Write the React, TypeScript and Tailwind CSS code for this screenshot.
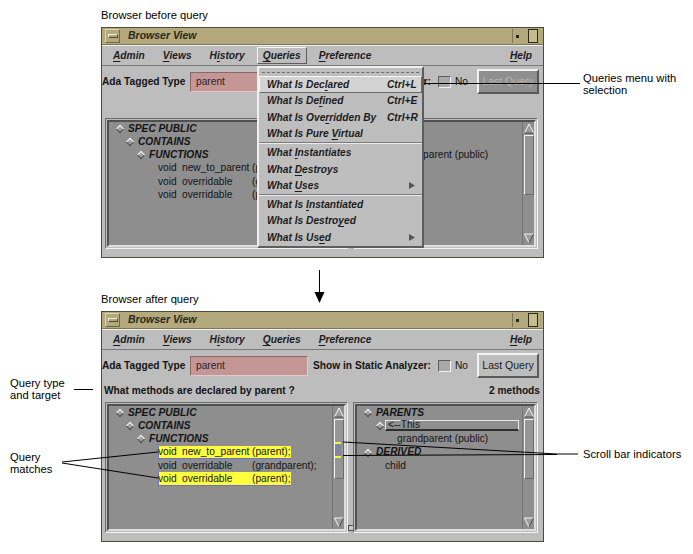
import React from "react";

const raised =
  "border border-t-[#f2f2f2] border-l-[#f2f2f2] border-b-[#6a6a6a] border-r-[#6a6a6a]";

function Mn({ text, at }: { text: string; at: number }) {
  return (
    <>
      {text.slice(0, at)}
      <span className="underline decoration-1 underline-offset-[2px]">{text[at]}</span>
      {text.slice(at + 1)}
    </>
  );
}

function Diamond() {
  return (
    <span className="w-[10px] h-[10px] flex items-center justify-center shrink-0">
      <span className="block w-[6px] h-[6px] rotate-45 border border-t-[#f6f6f6] border-l-[#f6f6f6] border-b-[#4a4a4a] border-r-[#4a4a4a] bg-[#a0a0a0]" />
    </span>
  );
}

function Node({ pad, label }: { pad: string; label: string }) {
  return (
    <div className={`h-[13.3px] flex items-center whitespace-nowrap ${pad}`}>
      <Diamond />
      <span className="ml-[3px] font-bold italic">{label}</span>
    </div>
  );
}

function Method({ name, owner, hit }: { name: string; owner: string; hit: boolean }) {
  return (
    <div className="h-[13.3px] flex items-center pl-[49px] whitespace-nowrap">
      <span
        className={`h-full flex items-center w-[133px] ${
          hit ? "bg-[#ffff3c] shadow-[inset_1px_0_0_#6d6dd2,inset_0_-1px_0_#6d6dd2]" : ""
        }`}
      >
        <span className="w-[24px] shrink-0">void</span>
        <span className="w-[70px] shrink-0">{name}</span>
        <span>{owner}</span>
      </span>
    </div>
  );
}

function ScrollBar({ marks = false }: { marks?: boolean }) {
  return (
    <div className="w-[12px] h-full flex flex-col items-center bg-[#8e8e8e] border-l border-[#747474]">
      <svg width="10" height="11" className="mt-[1px] shrink-0">
        <polyline points="0.5,10 5,1 9.5,10" fill="#9c9c9c" stroke="#f4f4f4" />
        <line x1="0.5" y1="10" x2="9.5" y2="10" stroke="#505050" />
      </svg>
      <div className={`mt-[1px] w-[10px] h-[60px] flex flex-col shrink-0 bg-[#969696] ${raised}`}>
        {marks && (
          <>
            <div className="h-[22px]" />
            <div className="h-[2px] w-[6px] bg-[#f5f53a]" />
            <div className="h-[12px] w-[6px] bg-[#80869f]" />
            <div className="h-[2px] w-[6px] bg-[#f5f53a]" />
          </>
        )}
      </div>
      <div className="flex-1" />
      <svg width="10" height="11" className="mb-[1px] shrink-0">
        <polyline points="9.5,1 0.5,1 5,10" fill="#9c9c9c" stroke="#f4f4f4" />
        <line x1="5" y1="10" x2="9.5" y2="1" stroke="#505050" />
      </svg>
    </div>
  );
}

function Pane({ wide, marks, children }: { wide: boolean; marks?: boolean; children: React.ReactNode }) {
  return (
    <div
      className={`${wide ? "w-[243px]" : "w-[185px]"} h-full border border-t-[#6a6a6a] border-l-[#6a6a6a] border-b-[#f4f4f4] border-r-[#f4f4f4] p-[1px]`}
    >
      <div className="h-full border-2 border-t-[#505050] border-l-[#505050] border-b-[#dedede] border-r-[#dedede] flex">
        <div className="flex-1 bg-[#8e8e8e] overflow-hidden text-[10.2px] leading-none text-[#141414]">
          {children}
        </div>
        <ScrollBar marks={marks} />
      </div>
    </div>
  );
}

type Item =
  | { sep: true }
  | { sep?: false; text: string; at: number; key?: string; sub?: boolean; sel?: boolean };

const MENU: Item[] = [
  { text: "What Is Declared", at: 11, key: "Ctrl+L", sel: true },
  { text: "What Is Defined", at: 10, key: "Ctrl+E" },
  { text: "What Is Overridden By", at: 11, key: "Ctrl+R" },
  { text: "What Is Pure Virtual", at: 13 },
  { sep: true },
  { text: "What Instantiates", at: 5 },
  { text: "What Destroys", at: 5 },
  { text: "What Uses", at: 5, sub: true },
  { sep: true },
  { text: "What Is Instantiated", at: 8 },
  { text: "What Is Destroyed", at: 14 },
  { text: "What Is Used", at: 10, sub: true },
];

function QueriesMenu() {
  return (
    <div
      className={`absolute left-[155px] top-[38px] z-10 w-[167px] h-[182px] bg-[#bebebe] border-2 border-t-[#f0f0f0] border-l-[#f0f0f0] border-b-[#5e5e5e] border-r-[#5e5e5e] text-[10.2px] font-bold italic text-[#1c1c1c]`}
    >
      <div className="h-[8px] flex items-center px-[3px]">
        <div className="w-full border-t border-dashed border-[#6e6e6e]" />
      </div>
      {MENU.map((m, i) =>
        m.sep ? (
          <div key={i} className="h-[2px] border-t border-[#7a7a7a] border-b border-b-[#ececec]" />
        ) : (
          <div
            key={i}
            className={`h-[16.6px] flex items-center pl-[7px] whitespace-nowrap border ${
              m.sel
                ? "bg-[#d3d3d3] border-t-[#f6f6f6] border-l-[#f6f6f6] border-b-[#6a6a6a] border-r-[#6a6a6a]"
                : "border-transparent"
            }`}
          >
            <span className="flex-1">
              <Mn text={m.text} at={m.at} />
            </span>
            <span className="w-[34px] flex items-center">
              {m.key}
              {m.sub && (
                <svg width="6" height="7" className="ml-[22px]">
                  <polygon points="0,0 6,3.5 0,7" fill="#555" />
                </svg>
              )}
            </span>
          </div>
        )
      )}
    </div>
  );
}

const MENUBAR = [
  { text: "Admin", at: 0 },
  { text: "Views", at: 0 },
  { text: "History", at: 1 },
  { text: "Queries", at: 0 },
  { text: "Preference", at: 0 },
];

function BrowserWindow({ before = false }: { before?: boolean }) {
  return (
    <div className="relative w-[443px] h-[231px] border border-[#4d4b3c] bg-[#bdbdbd] flex flex-col">
      {/* title bar */}
      <div className="h-[17px] bg-[#b3a97c] flex items-center border-b border-[#7e7856]">
        <div className={`ml-[3px] w-[15px] h-[14px] flex items-center justify-center ${"border border-t-[#ddd6b0] border-l-[#ddd6b0] border-b-[#6d684a] border-r-[#6d684a]"}`}>
          <div className="w-[10px] h-[4px] border border-t-[#f0ecd6] border-l-[#f0ecd6] border-b-[#4d4935] border-r-[#4d4935]" />
        </div>
        <span className="ml-[8px] text-[10.5px] font-bold italic text-[#2a2818]">Browser View</span>
        <div className="ml-auto mr-[5px] flex items-center gap-[6px]">
          <div className="w-[10px] h-[14px] flex items-center justify-center border-l border-[#7e7856]">
            <div className="w-[3px] h-[3px] bg-[#2a2818]" />
          </div>
          <div className="w-[10px] h-[14px] border border-[#2a2818] bg-[#c4bb90]" />
        </div>
      </div>

      {/* menu bar */}
      <div className="h-[21px] flex items-center pl-[5px] pr-[5px] gap-[6px] border-t border-[#f0f0f0] border-b border-b-[#7a7a7a] text-[10.2px] font-bold italic text-[#1c1c1c]">
        {MENUBAR.map((m) => (
          <span
            key={m.text}
            className={`h-[17px] px-[5px] flex items-center border ${
              before && m.text === "Queries"
                ? "border-t-[#f6f6f6] border-l-[#f6f6f6] border-b-[#5e5e5e] border-r-[#5e5e5e]"
                : "border-transparent"
            }`}
          >
            <Mn text={m.text} at={m.at} />
          </span>
        ))}
        <span className="ml-auto h-[17px] px-[5px] flex items-center border border-transparent">
          <Mn text="Help" at={0} />
        </span>
      </div>

      {/* type row */}
      <div className="h-[31px] flex items-center pr-[4px] text-[10.2px] text-[#141414]">
        <span className="w-[88px] font-bold whitespace-nowrap">Ada Tagged Type</span>
        <div className="w-[118px] h-[20px] flex items-center pl-[5px] bg-[#c49696] border border-t-[#8a6868] border-l-[#8a6868] border-b-[#e6c8c8] border-r-[#e6c8c8] text-[#2b1f1f]">
          parent
        </div>
        <span className="ml-[5px] font-bold whitespace-nowrap">Show in Static Analyzer:</span>
        <div className="ml-[7px] w-[13px] h-[12px] bg-[#a9a9a9] border border-t-[#5e5e5e] border-l-[#5e5e5e] border-b-[#f2f2f2] border-r-[#f2f2f2]" />
        <span className="ml-[4px]">No</span>
        <div
          className={`ml-auto w-[62px] h-[25px] flex items-center justify-center border-2 border-t-[#f2f2f2] border-l-[#f2f2f2] border-b-[#5a5a5a] border-r-[#5a5a5a] text-[10.5px] ${
            before ? "bg-[#8f8f8f] text-[#b6b6b6]" : "bg-[#bdbdbd] text-[#1c1c1c]"
          }`}
        >
          Last Query
        </div>
      </div>

      {/* query label row */}
      <div className="h-[19px] flex items-center pl-[2px] pr-[3px] text-[10.2px] font-bold text-[#141414]">
        {!before && (
          <>
            <span>What methods are declared by parent ?</span>
            <span className="ml-auto">2 methods</span>
          </>
        )}
      </div>

      {/* panes */}
      <div className="mt-[2px] h-[131px] flex pl-[3px]">
        <Pane wide marks={!before}>
          <Node pad="pl-[6px]" label="SPEC PUBLIC" />
          <Node pad="pl-[16px]" label="CONTAINS" />
          <Node pad="pl-[27px]" label="FUNCTIONS" />
          <Method name="new_to_parent" owner="(parent);" hit={!before} />
          <Method name="overridable" owner="(grandparent);" hit={false} />
          <Method name="overridable" owner="(parent);" hit={!before} />
        </Pane>
        <div className="w-[5px] flex flex-col justify-end items-center pb-[2px]">
          <div className="w-[6px] h-[6px] shrink-0 bg-[#c8c8c8] border border-[#4e4e4e]" />
        </div>
        <Pane wide={false}>
          <Node pad="pl-[6px]" label="PARENTS" />
          <div className="h-[13.3px] flex items-center pl-[18px] whitespace-nowrap">
            <Diamond />
            {before ? (
              <span className="ml-[3px]">&lt;--This</span>
            ) : (
              <span className="w-[134px] h-[11px] flex items-center pl-[2px] border border-[#e8e8e8] border-b-2 border-b-[#2e2e2e]">
                &lt;--This
              </span>
            )}
          </div>
          <div className="h-[13.3px] flex items-center pl-[40px] whitespace-nowrap">grandparent (public)</div>
          <Node pad="pl-[6px]" label="DERIVED" />
          <div className="h-[13.3px] flex items-center pl-[28px]">child</div>
        </Pane>
      </div>

      {before && <QueriesMenu />}
    </div>
  );
}

export default function App() {
  return (
    <div className="relative w-[693px] h-[554px] bg-white overflow-hidden font-['Liberation_Sans',Arial,Helvetica,sans-serif] text-black">
      <div className="pl-[101px] pt-[8px]">
        <div className="h-[14px] leading-[14px] text-[11.2px]">Browser before query</div>
        <div className="mt-[5px]">
          <BrowserWindow before />
        </div>
        <div className="mt-[34px] h-[14px] leading-[14px] text-[11.2px]">Browser after query</div>
        <div className="mt-[5px]">
          <BrowserWindow />
        </div>
      </div>

      {/* callout labels */}
      <div className="absolute left-[583px] top-[73px] text-[11.2px] leading-[11.5px]">
        Queries menu with
        <br />
        selection
      </div>
      <div className="absolute left-[10px] top-[378px] text-[11.2px] leading-[11.5px]">
        Query type
        <br />
        and target
      </div>
      <div className="absolute left-[10px] top-[452px] text-[11.2px] leading-[11.5px]">
        Query
        <br />
        matches
      </div>
      <div className="absolute left-[583px] top-[447px] text-[11.2px] leading-[14px] whitespace-nowrap">
        Scroll bar indicators
      </div>

      {/* callout lines and arrow */}
      <svg className="absolute inset-0 z-20 pointer-events-none" width="693" height="554">
        <g stroke="#000" strokeWidth="1" fill="none">
          <line x1="424" y1="83.5" x2="580" y2="83.5" />
          <line x1="74" y1="389.5" x2="93" y2="389.5" />
          <line x1="62" y1="462" x2="158" y2="452" />
          <line x1="62" y1="463" x2="158" y2="478" />
          <polyline points="343,442 557,454 578,454" />
          <line x1="343" y1="455.5" x2="557" y2="454.5" />
          <line x1="319.5" y1="270" x2="319.5" y2="293" />
        </g>
        <polygon points="314.5,292 324.5,292 319.5,303" fill="#000" />
      </svg>
    </div>
  );
}
